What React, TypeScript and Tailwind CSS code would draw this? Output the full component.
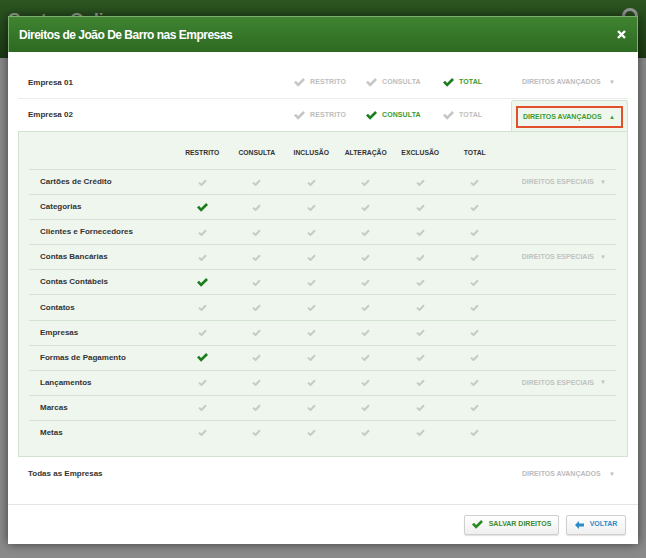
import React from "react";

const font = { fontFamily: '"Liberation Sans", Arial, sans-serif' };

const HeavyCheck: React.FC<{ color: string }> = ({ color }) => (
  <svg width="11" height="9" viewBox="0 0 11 9">
    <path d="M0 4.6 L2 2.8 L4.1 5 L9.1 0 L11 1.9 L4.1 8.8 Z" fill={color} />
  </svg>
);

const LightCheck = () => (
  <svg width="9" height="7" viewBox="0 0 9 7">
    <polyline points="1,3.6 3.5,6 8,1.2" fill="none" stroke="#c9c9c9" strokeWidth="2" />
  </svg>
);

const BackArrow = () => (
  <svg width="9" height="8" viewBox="0 0 9 8">
    <path d="M0 4 L4 0 L4 2.6 L9 2.6 L9 5.4 L4 5.4 L4 8 Z" fill="#2d8bc7" />
  </svg>
);

interface Permission {
  label: string;
  restrito?: boolean;
  especiais?: boolean;
}

const permissions: Permission[] = [
  { label: "Cartões de Crédito", especiais: true },
  { label: "Categorias", restrito: true },
  { label: "Clientes e Fornecedores" },
  { label: "Contas Bancárias", especiais: true },
  { label: "Contas Contábeis", restrito: true },
  { label: "Contatos" },
  { label: "Empresas" },
  { label: "Formas de Pagamento", restrito: true },
  { label: "Lançamentos", especiais: true },
  { label: "Marcas" },
  { label: "Metas" },
];

const columns = ["RESTRITO", "CONSULTA", "INCLUSÃO", "ALTERAÇÃO", "EXCLUSÃO", "TOTAL"];

const Option: React.FC<{ label: string; active?: boolean; width: string }> = ({ label, active, width }) => (
  <div className={`flex items-center gap-[5px] ${width}`}>
    <HeavyCheck color={active ? "#1c7d1c" : "#c6c6c6"} />
    <span className={`text-[7px] font-bold tracking-[0.1px] ${active ? "text-[#3d9a30]" : "text-[#bdbdbd]"}`}>
      {label}
    </span>
  </div>
);

const CompanyRow: React.FC<{ name: string; active: "restrito" | "consulta" | "total"; open?: boolean }> = ({
  name,
  active,
  open,
}) => (
  <div className={`flex h-[32px] items-center ${open ? "" : "border-b border-[#ececec]"}`}>
    <div className="flex-1 pl-[10px] text-[8px] font-bold text-[#333]">{name}</div>
    <Option label="RESTRITO" active={active === "restrito"} width="w-[72px]" />
    <Option label="CONSULTA" active={active === "consulta"} width="w-[77px]" />
    <Option label="TOTAL" active={active === "total"} width="w-[68px]" />
    {open ? (
      <div className="flex h-[31px] w-[117px] self-end items-start rounded-t-[3px] border border-b-0 border-[#d2e4cf] bg-[#eff6ee] px-[4px] pt-[5px]">
        <div className="flex h-[22px] w-full items-center justify-between border-2 border-[#e2502b] pl-[5px] pr-[6px]">
          <span className="text-[7px] font-bold text-[#3d9a30]">DIREITOS AVANÇADOS</span>
          <span className="text-[6px] text-[#3d9a30]">▲</span>
        </div>
      </div>
    ) : (
      <div className="flex w-[117px] items-center justify-between pl-[11px] pr-[13px]">
        <span className="text-[7px] font-bold text-[#bbbbbb]">DIREITOS AVANÇADOS</span>
        <span className="text-[6px] text-[#bbbbbb]">▼</span>
      </div>
    )}
  </div>
);

export default function App() {
  return (
    <div className="relative h-[558px] w-full overflow-hidden bg-[#8a8a8a]" style={font}>
      {/* page behind the dialog */}
      <div className="relative h-[58px] bg-gradient-to-b from-[#2c5621] to-[#1c3914]">
        <div className="absolute left-[8px] top-[7px] text-[17px] font-bold text-[#9aa797]">Contas Online</div>
        <div className="absolute right-[8px] top-[8px] h-[16px] w-[16px] rounded-full border-[3px] border-[#9a9a9a]" />
      </div>

      {/* dialog */}
      <div className="absolute left-[8px] top-[16px] w-[630px] bg-white shadow-[0_0_10px_rgba(0,0,0,0.55)]">
        <div className="flex h-[36px] items-center justify-between border border-b-0 border-[#7fae72] bg-gradient-to-b from-[#3f8431] to-[#2e6a22] pl-[10px] pr-[11px]">
          <span className="text-[12px] font-bold tracking-[-0.5px] text-white">
            Direitos de João De Barro nas Empresas
          </span>
          <svg width="9" height="9" viewBox="0 0 9 9">
            <path d="M1 1 L8 8 M8 1 L1 8" stroke="#fff" strokeWidth="2.4" />
          </svg>
        </div>

        <div className="px-[10px] pb-[13px] pt-[15px]">
          <CompanyRow name="Empresa 01" active="total" />
          <CompanyRow name="Empresa 02" active="consulta" open />

          <div className="border border-[#d2e4cf] bg-[#eff6ee] pb-[11px] pl-[10px] pr-[11px] pt-[5px]">
            <div className="grid h-[32px] grid-cols-[146px_repeat(6,54.5px)_1fr] items-center">
              <div />
              {columns.map((c) => (
                <div key={c} className="text-center text-[6.8px] font-bold text-[#333]">
                  {c}
                </div>
              ))}
              <div />
            </div>
            {permissions.map((p) => (
              <div
                key={p.label}
                className="grid h-[25.1px] grid-cols-[146px_repeat(6,54.5px)_1fr] items-center border-t border-[#d6e5d3]"
              >
                <div className="pl-[11px] text-[8px] font-bold text-[#333]">{p.label}</div>
                {columns.map((c, j) => (
                  <div key={c} className="flex justify-center">
                    {j === 0 && p.restrito ? <HeavyCheck color="#1c7d1c" /> : <LightCheck />}
                  </div>
                ))}
                <div className="flex items-center justify-end gap-[6px] pr-[10px]">
                  {p.especiais && (
                    <>
                      <span className="text-[7px] font-bold text-[#c2c2c2]">DIREITOS ESPECIAIS</span>
                      <span className="text-[6px] text-[#c2c2c2]">▼</span>
                    </>
                  )}
                </div>
              </div>
            ))}
          </div>

          <div className="flex h-[34px] items-center">
            <div className="flex-1 pl-[10px] text-[8px] font-bold text-[#333]">Todas as Empresas</div>
            <div className="flex w-[117px] items-center justify-between pl-[11px] pr-[13px]">
              <span className="text-[7px] font-bold text-[#bbbbbb]">DIREITOS AVANÇADOS</span>
              <span className="text-[6px] text-[#bbbbbb]">▼</span>
            </div>
          </div>
        </div>

        <div className="flex h-[40px] items-center justify-end gap-[7px] border-t border-[#e4e4e4] pr-[12px]">
          <button className="flex h-[20px] w-[95px] items-center justify-center gap-[6px] rounded-[2px] border border-[#cfcfcf] bg-gradient-to-b from-white to-[#efefef] shadow-[0_1px_1px_rgba(0,0,0,0.12)]">
            <HeavyCheck color="#2a8a22" />
            <span className="text-[7px] font-bold text-[#3d8a2c]">SALVAR DIREITOS</span>
          </button>
          <button className="flex h-[20px] w-[60px] items-center justify-center gap-[6px] rounded-[2px] border border-[#cfcfcf] bg-gradient-to-b from-white to-[#efefef] shadow-[0_1px_1px_rgba(0,0,0,0.12)]">
            <BackArrow />
            <span className="text-[7px] font-bold text-[#2d8bc7]">VOLTAR</span>
          </button>
        </div>
      </div>
    </div>
  );
}
